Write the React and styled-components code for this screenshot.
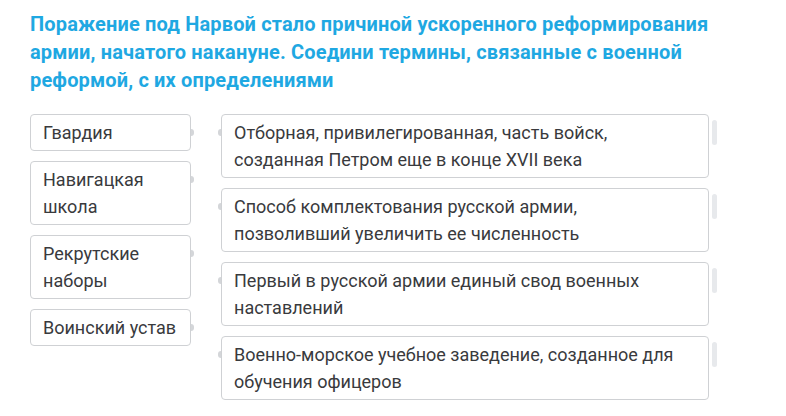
import React from "react";
import styled, { createGlobalStyle } from "styled-components";

const Global = createGlobalStyle`
  html, body { margin: 0; padding: 0; background: #fff; }
  body { font-family: Roboto, "Noto Sans", sans-serif; }
`;

const Page = styled.div`
  width: 786px;
  height: 416px;
  box-sizing: border-box;
  padding: 10px 30px 0 30px;
  overflow: hidden;
`;

const Title = styled.h1`
  margin: 0;
  font-family: Roboto, sans-serif;
  font-weight: 700;
  font-size: 20px;
  letter-spacing: 0.15px;
  line-height: 28px;
  color: #1fa8e2;
  width: 700px;
`;

const Board = styled.div`
  margin-top: 20px;
  display: flex;
  gap: 30px;
  align-items: flex-start;
`;

const Column = styled.div`
  display: flex;
  flex-direction: column;
  gap: 10px;
  width: ${(p) => p.$w}px;
`;

const Card = styled.div`
  position: relative;
  box-sizing: border-box;
  border: 1px solid #cfd1d4;
  border-radius: 4px;
  background: #fff;
  padding: 4px 12px;
  min-height: ${(p) => (p.$tall ? 64 : 37)}px;
  font-family: Roboto, sans-serif;
  font-size: 18px;
  line-height: 27px;
  color: #393a3d;
`;

const Dot = styled.span`
  position: absolute;
  top: 14px;
  width: 3px;
  height: 7px;
  background: #d4d6d9;
  ${(p) =>
    p.$side === "right"
      ? "right: -4px; border-radius: 0 4px 4px 0;"
      : "left: -4px; border-radius: 4px 0 0 4px;"}
`;

const Handle = styled.span`
  position: absolute;
  left: calc(100% + 4px);
  top: 5px;
  width: 5px;
  height: 25px;
  border-radius: 3px;
  background: #e7e9ec;
`;

const terms = [
  { t: "Гвардия", tall: false },
  { t: "Навигацкая школа", tall: true },
  { t: "Рекрутские наборы", tall: true },
  { t: "Воинский устав", tall: false },
];

const defs = [
  "Отборная, привилегированная, часть войск, созданная Петром еще в конце XVII века",
  "Способ комплектования русской армии, позволивший увеличить ее численность",
  "Первый в русской армии единый свод военных наставлений",
  "Военно-морское учебное заведение, созданное для обучения офицеров",
];

export default function App() {
  return (
    <Page>
      <Global />
      <Title>
        Поражение под Нарвой стало причиной ускоренного реформирования армии,
        начатого накануне. Соедини термины, связанные с военной реформой, с их
        определениями
      </Title>
      <Board>
        <Column $w={161}>
          {terms.map((x) => (
            <Card key={x.t} $tall={x.tall}>
              {x.t}
              <Dot $side="right" />
            </Card>
          ))}
        </Column>
        <Column $w={488}>
          {defs.map((d) => (
            <Card key={d} $tall>
              {d}
              <Dot $side="left" />
              <Handle />
            </Card>
          ))}
        </Column>
      </Board>
    </Page>
  );
}
